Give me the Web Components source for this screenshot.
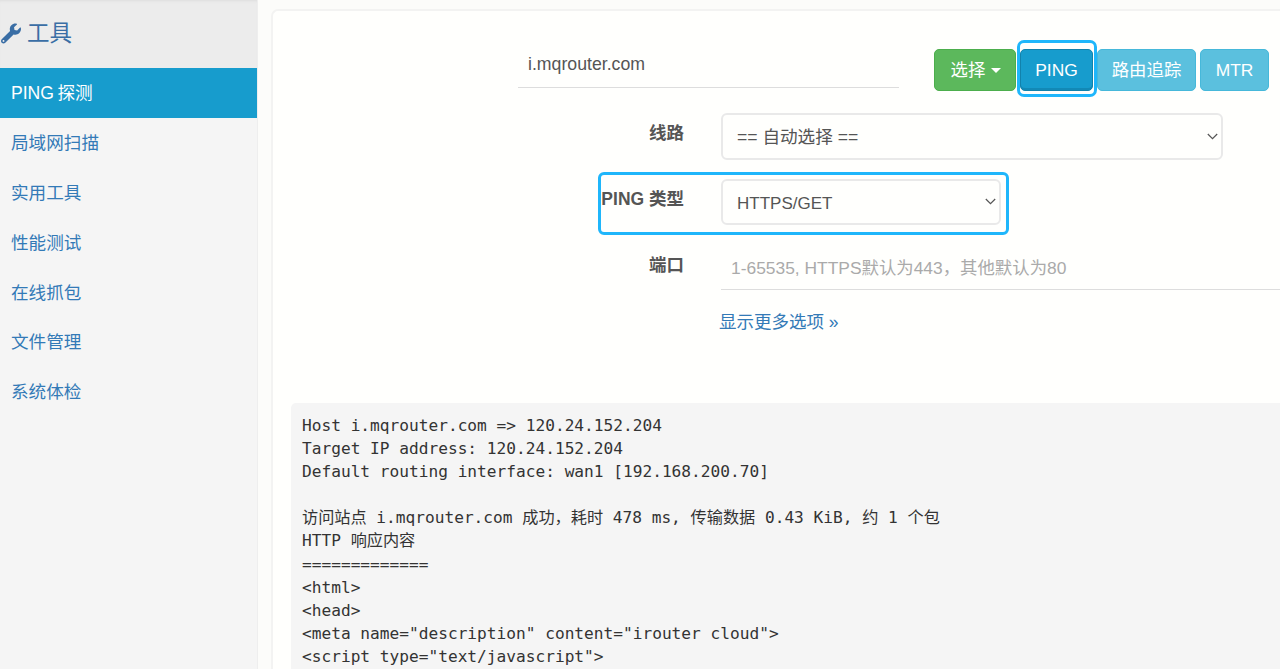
<!DOCTYPE html>
<html><head><meta charset="utf-8"><title>工具</title>
<style>
html,body{margin:0;height:669px;overflow:hidden;background:#fcfcfa}
body{font:16.1px/23px "Liberation Sans","Noto Sans CJK SC",sans-serif;color:#555;text-spacing-trim:space-all}
</style></head><body>
<tool-page>
  <tool-sidebar slot="side" title-text="工具">
    <nav-item active>PING 探测</nav-item>
    <nav-item>局域网扫描</nav-item>
    <nav-item>实用工具</nav-item>
    <nav-item>性能测试</nav-item>
    <nav-item>在线抓包</nav-item>
    <nav-item>文件管理</nav-item>
    <nav-item>系统体检</nav-item>
  </tool-sidebar>
  <tool-card>
    <host-row>
      <line-input slot="input" value="i.mqrouter.com" style="height:38px;padding-bottom:8px;font-size:17.7px"></line-input>
      <tool-button slot="btn" kind="green" caret style="width:82px;padding-left:2px">选择</tool-button>
      <tool-button slot="btn" kind="active" mark style="width:73px;margin-left:4px">PING</tool-button>
      <tool-button slot="btn" kind="info" style="width:99px;margin-left:4px">路由追踪</tool-button>
      <tool-button slot="btn" kind="info" style="width:69px;margin-left:4px">MTR</tool-button>
    </host-row>
    <form-row label="线路" style="margin-top:22px;height:47px"><fake-select style="width:502px;font-size:17.6px">== 自动选择 ==</fake-select></form-row>
    <form-row label="PING 类型" mark style="margin-top:19px;height:46px"><fake-select style="width:280px;font-size:17px">HTTPS/GET</fake-select></form-row>
    <form-row label="端口" style="margin-top:20px;height:45px"><line-input placeholder="1-65535, HTTPS默认为443，其他默认为80" style="height:45px;font-size:17.4px"></line-input></form-row>
    <more-link>显示更多选项 »</more-link>
    <result-pre>Host i.mqrouter.com =&gt; 120.24.152.204
Target IP address: 120.24.152.204
Default routing interface: wan1 [192.168.200.70]

访问站点 i.mqrouter.com 成功，耗时 478 ms, 传输数据 0.43 KiB, 约 1 个包
HTTP 响应内容
=============
&lt;html&gt;
&lt;head&gt;
&lt;meta name="description" content="irouter cloud"&gt;
&lt;script type="text/javascript"&gt;</result-pre>
  </tool-card>
</tool-page>
<script>
function def(name, css, html){
  customElements.define(name, class extends HTMLElement{
    connectedCallback(){
      if(this.shadowRoot) return;
      const r=this.attachShadow({mode:'open'});
      r.innerHTML='<style>'+css+'</style>'+(typeof html==='function'?html(this):html);
    }
  });
}
def('tool-page',`:host{display:flex;height:669px;overflow:hidden}`,'<slot name="side"></slot><slot></slot>');
def('tool-sidebar',
 `:host{display:block;width:257px;flex:none;height:669px;background:#f5f5f5;border-right:1px solid #eee}
  header{height:68px;box-sizing:border-box;background:#ececec;box-shadow:inset 0 3px 3px -2px #ddd;display:flex;align-items:center;gap:6px;padding:0 0 2px 1px;color:#3a6ea5;font-size:22.5px}
  svg{width:20px;height:21px;fill:#3a6ea5;flex:none}`,
 e=>`<header><svg viewBox="0 0 512 512"><path d="M507.73 109.1c-2.24-9.03-13.54-12.09-20.12-5.51l-74.36 74.36-67.88-11.31-11.31-67.88 74.36-74.36c6.62-6.62 3.43-17.9-5.66-20.16-47.38-11.74-99.55.91-136.58 37.93-39.64 39.64-50.55 97.1-34.05 147.2L18.74 402.76c-24.99 24.99-24.99 65.51 0 90.5 24.99 24.99 65.51 24.99 90.5 0l213.21-213.21c50.12 16.71 107.47 5.68 147.37-34.22 37.07-37.07 49.7-89.32 37.91-136.73zM64 472c-13.25 0-24-10.75-24-24 0-13.26 10.75-24 24-24s24 10.74 24 24c0 13.25-10.75 24-24 24z"/></svg><span>${e.getAttribute('title-text')}</span></header><slot></slot>`);
def('nav-item',
 `:host{display:flex;align-items:center;height:49.8px;padding:2px 0 0 11px;box-sizing:border-box;color:#337ab7;font-size:17.6px;word-spacing:-1.5px}
  :host([active]){background:#179ccd;color:#fff}`,
 '<slot></slot>');
def('tool-card',
 `:host{display:block;flex:1;min-width:0;margin:9px 0 0 13px;padding:30px 0 0 19px;background:#fffffd;border:2px solid #f3f3f2;border-right:0;border-bottom:0;border-radius:7px 0 0 0;box-sizing:border-box;height:660px;overflow:hidden}`,
 '<slot></slot>');
def('host-row',
 `:host{display:flex;align-items:flex-start;padding-top:8px;box-sizing:border-box;height:50px}
  .i{margin-left:226px;width:381px;margin-top:1px;flex:none}
  .b{display:flex;margin-left:35px}`,
 '<div class="i"><slot name="input"></slot></div><div class="b"><slot name="btn"></slot></div>');
def('line-input',
 `:host{display:block;box-sizing:border-box;border-bottom:1px solid #ddd;padding-left:10px;color:#555}
  div{display:flex;align-items:center;height:100%;white-space:nowrap}
  .ph{color:#aaa;padding-top:1px}`,
 e=>{const p=e.getAttribute('placeholder');return p?`<div class="ph">${p}</div>`:`<div>${e.getAttribute('value')}</div>`});
def('tool-button',
 `:host{display:flex;align-items:center;justify-content:center;position:relative;height:42px;box-sizing:border-box;padding-top:1px;border-radius:5px;border:1px solid;color:#fff;font-size:17.4px;flex:none}
  :host([kind=green]){background:#5cb85c;border-color:#4cae4c}
  :host([kind=info]){background:#5bc0de;border-color:#46b8da}
  :host([kind=active]){background:#179ccd;border-color:#1282ac;box-shadow:inset 0 -2px 0 #1289b6}
  .caret{display:inline-block;margin-left:6px;border-top:5px solid #fff;border-left:5px solid transparent;border-right:5px solid transparent}
  .mark{position:absolute;left:-4px;top:-10px;right:-5px;bottom:-7px;border:3px solid #1fb6fb;border-radius:7px;box-sizing:border-box;pointer-events:none}`,
 e=>`<slot></slot>${e.hasAttribute('caret')?'<i class="caret"></i>':''}${e.hasAttribute('mark')?'<div class="mark"></div>':''}`);
def('form-row',
 `:host{display:flex;position:relative;box-sizing:border-box}
  label{width:392px;flex:none;text-align:right;font-weight:bold;font-size:17.5px;color:#555;padding-top:9px;line-height:23px;height:23px;white-space:nowrap}
  .c{margin-left:37px;flex:1;min-width:0}
  .mark{position:absolute;left:306px;top:-7px;width:411px;height:63px;border:3px solid #1fb6fb;border-radius:6px;box-sizing:border-box}`,
 e=>`<label>${e.getAttribute('label')}</label><div class="c"><slot></slot></div>${e.hasAttribute('mark')?'<div class="mark"></div>':''}`);
def('fake-select',
 `:host{display:flex;align-items:center;height:100%;box-sizing:border-box;border:2px solid #e9e9e9;border-radius:6px;padding:2px 0 0 14px;color:#555;position:relative;background:#fffffd}
  svg{position:absolute;right:3px;top:50%;margin-top:-4px;width:11px;height:7px;fill:none;stroke:#555;stroke-width:1.2}`,
 '<slot></slot><svg viewBox="0 0 11 7"><path d="M.8 1 5.5 5.7 10.2 1"/></svg>');
def('more-link',
 `:host{display:block;margin:21px 0 0 427px;color:#337ab7;font-size:17.5px;line-height:23px}`,
 '<slot></slot>');
def('result-pre',
 `:host{display:block;margin:69px 0 0 -1px;padding:11px 11px;height:400px;background:#f5f5f5;border-radius:5px 0 0 0;white-space:pre;font:16.16px/23.1px "DejaVu Sans Mono","Noto Sans CJK SC",monospace;color:#333;box-sizing:border-box;text-spacing-trim:space-all}`,
 '<slot></slot>');
</script>
</body></html>
